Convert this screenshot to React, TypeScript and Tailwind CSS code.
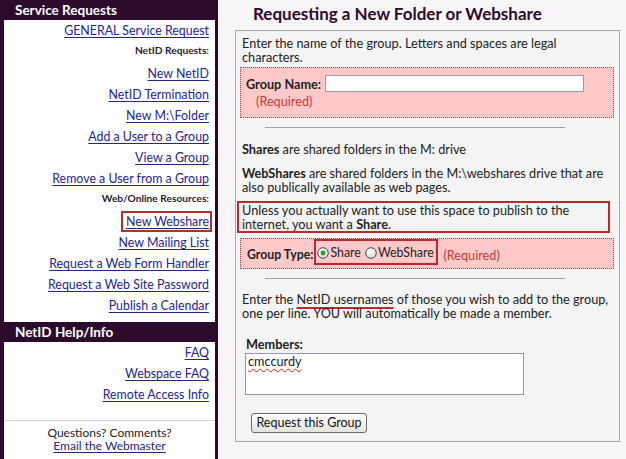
import React from "react";

const font = "font-['Lato','Liberation_Sans',sans-serif]";

type Item = { label: string; kind?: "link" | "label" | "boxed" };

const serviceItems: Item[] = [
  { label: "GENERAL Service Request" },
  { label: "NetID Requests:", kind: "label" },
  { label: "New NetID" },
  { label: "NetID Termination" },
  { label: "New M:\\Folder" },
  { label: "Add a User to a Group" },
  { label: "View a Group" },
  { label: "Remove a User from a Group" },
  { label: "Web/Online Resources:", kind: "label" },
  { label: "New Webshare", kind: "boxed" },
  { label: "New Mailing List" },
  { label: "Request a Web Form Handler" },
  { label: "Request a Web Site Password" },
  { label: "Publish a Calendar" },
];

const helpItems: Item[] = [
  { label: "FAQ" },
  { label: "Webspace FAQ" },
  { label: "Remote Access Info" },
];

function SideRow({ item }: { item: Item }) {
  if (item.kind === "label") {
    return (
      <div className="h-[22px] flex items-center justify-end pr-[6px] pb-[3px] text-[10.2px] font-bold text-[#2c1a2c]">
        {item.label}
      </div>
    );
  }
  return (
    <div className="h-[21px] flex items-center justify-end pr-[6px]">
      <a
        href="#"
        className={
          "text-[12.4px] leading-[15px] text-[#25258c] underline underline-offset-[2px] " +
          (item.kind === "boxed" ? "outline-2 outline-[#c0282d] outline-offset-[1px] pl-[2px]" : "")
        }
      >
        {item.label}
      </a>
    </div>
  );
}

function SideHeader({ title }: { title: string }) {
  return (
    <div className="h-[20px] bg-[#2c0a2c] flex items-center pl-[11px] text-[13.5px] font-bold text-white">
      {title}
    </div>
  );
}

function Sidebar() {
  return (
    <div className="w-[218px] shrink-0 bg-white border-l-4 border-r-[3px] border-[#2c0a2c] flex flex-col">
      <SideHeader title="Service Requests" />
      {serviceItems.map((it) => (
        <SideRow key={it.label} item={it} />
      ))}
      <div className="h-[6px]" />
      <SideHeader title="NetID Help/Info" />
      {helpItems.map((it) => (
        <SideRow key={it.label} item={it} />
      ))}
      <div className="mt-[15px] border-t border-[#d8d8d8] pt-[5px] pb-[6px] text-center text-[12px] leading-[13px] text-[#222]">
        <div>Questions? Comments?</div>
        <a href="#" className="text-[#25258c] underline underline-offset-[2px]">
          Email the Webmaster
        </a>
      </div>
    </div>
  );
}

function Radio({ checked }: { checked?: boolean }) {
  return (
    <svg width="12" height="12" viewBox="0 0 12 12" className="shrink-0">
      <defs>
        <radialGradient id="rg" cx="0.35" cy="0.3" r="0.8">
          <stop offset="0" stopColor="#ffffff" />
          <stop offset="1" stopColor="#d8d8d0" />
        </radialGradient>
      </defs>
      <circle cx="6" cy="6" r="5.3" fill="url(#rg)" stroke="#3a4a5a" strokeWidth="1" />
      {checked && <circle cx="6" cy="6" r="2.4" fill="#2f9a2f" />}
    </svg>
  );
}

function Rule() {
  return <div className="ml-[29px] w-[300px] h-px bg-[#a0a0a0]" />;
}

function Panel() {
  return (
    <div className="ml-[17px] mt-[5px] w-[385px] h-[412px] border border-[#a8a8a8] bg-[#f4f4f4] text-[12.7px] leading-[14px] text-[#222]">
      <p className="pt-[5px] px-[6px]">
        Enter the name of the group. Letters and spaces are legal
        <br />
        characters.
      </p>

      <div className="mt-[3px] ml-[4px] mr-[5px] border border-dotted border-[#b03a3a] bg-[#ffc9c9] pt-[7px] pb-[9px]">
        <div className="h-[17px] flex items-center pl-[5px]">
          <span className="font-bold mr-[4px]">Group Name:</span>
          <input className="w-[259px] h-[17px] bg-white border border-[#9a9a9a] outline-none" />
        </div>
        <div className="mt-[2px] pl-[15px] text-[#c43a3a]">(Required)</div>
      </div>

      <div className="mt-[9px]">
        <Rule />
      </div>

      <p className="mt-[14px] px-[6px]">
        <b className="inline-block leading-[14px]">Shares</b> are shared folders in the M: drive
      </p>
      <p className="mt-[10px] px-[6px]">
        <b className="inline-block leading-[14px]">WebShares</b> are shared folders in the
        M:\webshares drive that are
        <br />
        also publically available as web pages.
      </p>

      <div className="mt-[7px] ml-[1px] w-[373px] border-2 border-[#c0282d] pl-[3px] leading-[14px]">
        Unless you actually want to use this space to publish to the
        <br />
        internet, you want a <b className="inline-block leading-[14px]">Share</b>.
      </div>

      <div className="mt-[5px] ml-[4px] mr-[5px] border border-dotted border-[#b03a3a] bg-[#ffc9c9] h-[31px] flex items-start pl-[6px]">
        <span className="font-bold mt-[9px] mr-px text-[12.3px]">Group Type:</span>
        <div className="w-[124px] h-[26px] border-2 border-[#c0282d] flex items-center pl-[1px] pt-[2px] text-[12.4px]">
          <label className="flex items-center">
            <Radio checked />
            <span className="ml-px">Share</span>
          </label>
          <label className="flex items-center ml-[4px]">
            <Radio />
            <span className="ml-px">WebShare</span>
          </label>
        </div>
        <span className="ml-[5px] mt-[9px] text-[#c43a3a]">(Required)</span>
      </div>

      <div className="mt-[9px]">
        <Rule />
      </div>

      <p className="mt-[13px] px-[6px]">
        Enter the{" "}
        <span className="inline-block leading-[14px] underline decoration-[#c0282d] decoration-2 underline-offset-[3px]">
          NetID usernames
        </span>{" "}
        of those you wish to add to the group,
        <br />
        one per line. YOU will automatically be made a member.
      </p>

      <div className="mt-[17px] ml-[10px] font-bold">Members:</div>
      <div className="mt-[2px] ml-[9px] w-[279px] h-[42px] bg-white border border-[#8a9aaa] px-[2px]">
        <span className="underline decoration-wavy decoration-[#d02020] decoration-1 underline-offset-[2px]">
          cmccurdy
        </span>
      </div>

      <button className="mt-[18px] ml-[15px] w-[116px] h-[20px] rounded-[3px] border border-[#6a6a6a] bg-gradient-to-b from-[#ffffff] to-[#e4e4dc] text-[12.5px] leading-[14px] text-[#111]">
        Request this Group
      </button>
    </div>
  );
}

export default function App() {
  return (
    <div className={"w-[626px] h-[459px] overflow-hidden flex bg-[#f7f5f7] " + font}>
      <Sidebar />
      <div className="flex-1 flex flex-col">
        <h1 className="h-[22px] mt-[3px] pl-[35px] text-[17px] leading-[22px] font-bold text-[#2c0a2c]">
          Requesting a New Folder or Webshare
        </h1>
        <Panel />
      </div>
    </div>
  );
}
